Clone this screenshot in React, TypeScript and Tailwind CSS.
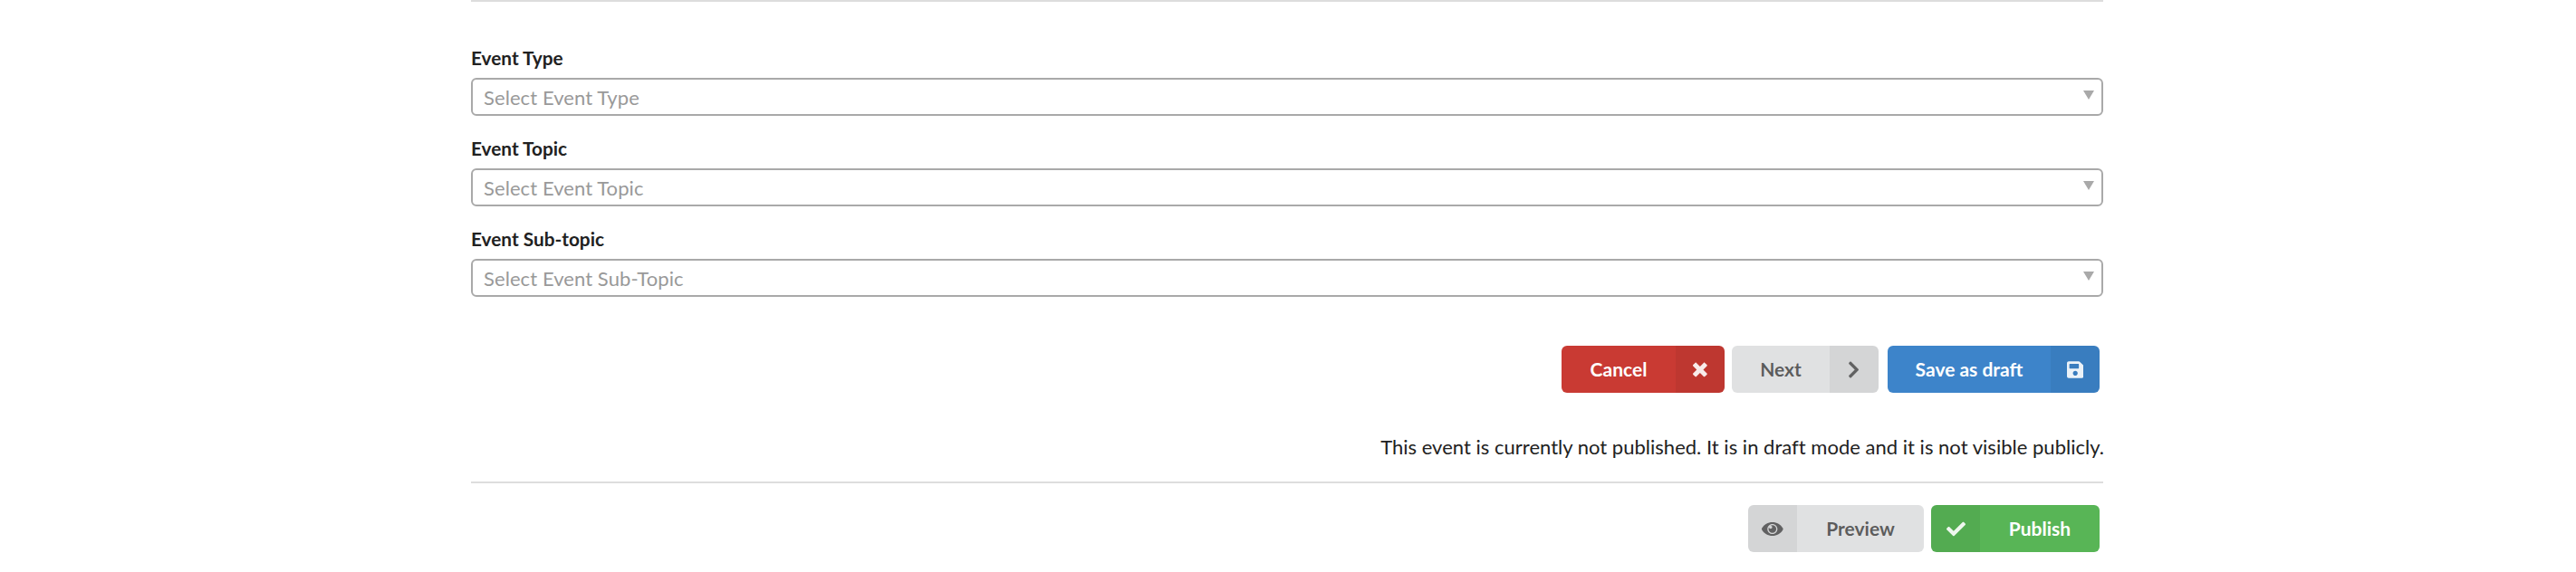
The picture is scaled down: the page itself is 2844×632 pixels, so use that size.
import type { ReactNode } from 'react'
import { FaCheck, FaChevronRight, FaSave } from 'react-icons/fa'

const EyeIcon = () => (
  <svg viewBox="0 0 576 512" className="h-[21px] w-[23.6px]" fill="currentColor">
    <path d="M569.354 231.631C512.969 135.949 407.81 72 288 72 168.14 72 63.004 135.994 6.646 231.631a47.999 47.999 0 0 0 0 48.739C63.031 376.051 168.19 440 288 440c119.86 0 224.996-63.994 281.354-159.631a47.997 47.997 0 0 0 0-48.738zM288 392c-75.162 0-136-60.827-136-136 0-75.162 60.826-136 136-136 75.162 0 136 60.826 136 136 0 75.162-60.826 136-136 136zm104-136c0 57.438-46.562 104-104 104s-104-46.562-104-104c0-17.708 4.431-34.379 12.236-48.973l-.001.032c0 23.651 19.173 42.823 42.824 42.823s42.824-19.173 42.824-42.823c0-23.651-19.173-42.824-42.824-42.824l-.032.001C253.621 156.431 270.292 152 288 152c57.438 0 104 46.562 104 104z" />
  </svg>
)

const CloseIcon = () => (
  <svg viewBox="0 0 384 512" className="h-[21px] w-[15.75px]" fill="currentColor">
    <path d="M323.1 441l53.9-53.9c9.4-9.4 9.4-24.5 0-33.9L279.8 256l97.2-97.2c9.4-9.4 9.4-24.5 0-33.9L323.1 71c-9.4-9.4-24.5-9.4-33.9 0L192 168.2 94.8 71c-9.4-9.4-24.5-9.4-33.9 0L7 124.9c-9.4 9.4-9.4 24.5 0 33.9l97.2 97.2L7 353.2c-9.4 9.4-9.4 24.5 0 33.9L60.9 441c9.4 9.4 24.5 9.4 33.9 0l97.2-97.2 97.2 97.2c9.3 9.3 24.5 9.3 33.9 0z" />
  </svg>
)

function SelectField({ label, placeholder }: { label: string; placeholder: string }) {
  return (
    <div className="flex flex-col gap-[10px]">
      <label className="text-[20.8px] leading-[25px] font-bold">{label}</label>
      <div className="flex h-[42px] justify-between rounded-[6px] border-2 border-[#a9a9a9] pt-px pr-2 pl-3 text-[22px] leading-[37px] tracking-[0.08px] text-[#999999]">
        <span>{placeholder}</span>
        <svg viewBox="0 0 12 10" className="mt-[11px] h-[10px] w-3" fill="#a9a9a9">
          <path d="M0 0h12L6 10z" />
        </svg>
      </div>
    </div>
  )
}

type ButtonProps = { color: string; width: string; icon: ReactNode; iconLeft?: boolean; children: ReactNode }

function LabeledButton({ color, width, icon, iconLeft, children }: ButtonProps) {
  return (
    <button
      className={`flex h-[52px] overflow-hidden rounded-[6px] text-[21px] leading-[51px] font-bold ${iconLeft ? 'flex-row-reverse' : ''} ${width} ${color}`}
    >
      <span className="flex-1 text-center whitespace-nowrap">{children}</span>
      <span className="flex h-full w-[54px] items-center justify-center bg-black/5">
        <span className="opacity-90">{icon}</span>
      </span>
    </button>
  )
}

export default function App() {
  return (
    <main className="flex h-[632px] justify-center bg-white pr-[2px] font-[Lato,sans-serif] text-[#212121]">
      <div className="w-[1802px]">
        <hr className="border-0 border-t-2 border-[#dddddd]" />
        <div className="mt-[49px] flex flex-col gap-[23px]">
          <SelectField label="Event Type" placeholder="Select Event Type" />
          <SelectField label="Event Topic" placeholder="Select Event Topic" />
          <SelectField label="Event Sub-topic" placeholder="Select Event Sub-Topic" />
        </div>
        <div className="mt-[54px] flex justify-end pr-1">
          <LabeledButton color="bg-[#c93a33] text-white" width="mr-2 w-[180px]" icon={<CloseIcon />}>
            Cancel
          </LabeledButton>
          <LabeledButton
            color="bg-[#e0e1e2] text-black/60"
            width="mr-[10px] w-[162px]"
            icon={<FaChevronRight className="h-[21px] w-[13.1px]" />}
          >
            Next
          </LabeledButton>
          <LabeledButton
            color="bg-[#3d84ca] text-white"
            width="w-[234px]"
            icon={<FaSave className="h-[21px] w-[18.4px]" />}
          >
            Save as draft
          </LabeledButton>
        </div>
        <p className="mt-[46px] -mr-px text-right text-[22px] leading-[27px] tracking-[0.015px]">
          This event is currently not published. It is in draft mode and it is not visible publicly.
        </p>
        <hr className="mt-[25px] border-0 border-t-2 border-[#dddddd]" />
        <div className="mt-6 flex justify-end gap-2 pr-1">
          <LabeledButton color="bg-[#e0e1e2] text-black/60" width="w-[194px]" icon={<EyeIcon />} iconLeft>
            Preview
          </LabeledButton>
          <LabeledButton
            color="bg-[#58b556] text-white"
            width="w-[186px]"
            icon={<FaCheck className="size-[21px]" />}
            iconLeft
          >
            Publish
          </LabeledButton>
        </div>
      </div>
    </main>
  )
}
